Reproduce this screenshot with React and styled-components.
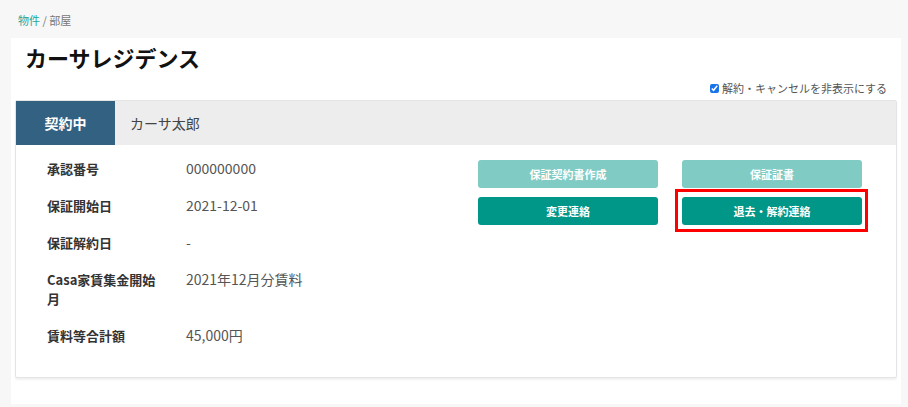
import React from "react";
import styled, { createGlobalStyle } from "styled-components";

const GlobalStyle = createGlobalStyle`
  html, body {
    margin: 0;
    padding: 0;
    background: #f7f7f7;
    font-family: "Noto Sans CJK JP", "Noto Sans", sans-serif;
  }
`;

const Page = styled.div`
  width: 908px;
  height: 407px;
  overflow: hidden;
  padding: 12px 7px 0 11px;
  box-sizing: border-box;
`;

const Breadcrumb = styled.div`
  font-size: 11px;
  line-height: 16px;
  color: #777;
  padding-left: 7px;
  margin-bottom: 10px;
`;

const CrumbLink = styled.span`
  color: #26a69a;
`;

const Panel = styled.div`
  background: #ffffff;
  padding: 5px 4px 26px 4px;
`;

const Title = styled.h1`
  margin: 0 0 0 10px;
  font-size: 22px;
  font-weight: 700;
  line-height: 28px;
  color: #111;
`;

const FilterRow = styled.label`
  display: flex;
  justify-content: flex-end;
  align-items: center;
  margin-top: 10px;
  padding-right: 10px;
  font-size: 11px;
  line-height: 14px;
  color: #555;
`;

const Check = styled.input`
  width: 9px;
  height: 9px;
  margin: 0 3px 0 0;
  accent-color: #1a73e8;
`;

const Card = styled.div`
  margin-top: 5px;
  border: 1px solid #e4e4e4;
  border-radius: 2px;
  box-shadow: 0 2px 2px rgba(0, 0, 0, 0.06);
`;

const CardHeader = styled.div`
  display: flex;
  height: 44px;
  background: #ededed;
`;

const StatusTab = styled.div`
  width: 99px;
  display: flex;
  align-items: center;
  justify-content: center;
  background: #336182;
  color: #ffffff;
  font-size: 14px;
  font-weight: 700;
`;

const Tenant = styled.div`
  display: flex;
  align-items: center;
  padding-left: 15px;
  font-size: 14px;
  color: #444;
`;

const CardBody = styled.div`
  display: grid;
  grid-template-columns: 1fr 1fr;
  padding: 5px 0 23px 0;
`;

const InfoTable = styled.div`
  padding-left: 31px;
`;

const InfoRow = styled.div`
  display: flex;
  padding: 9px 0;
  line-height: 19px;
`;

const Label = styled.div`
  width: 115px;
  flex-shrink: 0;
  margin-right: 24px;
  font-size: 13px;
  font-weight: 700;
  color: #333;
`;

const Value = styled.div`
  font-size: 14px;
  color: #555;
`;

const Actions = styled.div`
  display: grid;
  grid-template-columns: 180px 180px;
  grid-auto-rows: 28px;
  column-gap: 24px;
  row-gap: 9px;
  justify-content: end;
  align-content: start;
  padding: 10px 34px 0 0;
`;

const ActionWrap = styled.div`
  position: relative;
  display: flex;
`;

const ActionButton = styled.button`
  flex: 1;
  border: none;
  border-radius: 3px;
  background: ${(p) => (p.$disabled ? "#80cbc4" : "#009688")};
  color: #ffffff;
  font-family: inherit;
  font-size: 11px;
  font-weight: 700;
  cursor: pointer;
`;

const Highlight = styled.div`
  position: absolute;
  left: -7px;
  top: -8px;
  right: -6px;
  bottom: -7px;
  border: 3px solid #ff0000;
  pointer-events: none;
`;

const rows = [
  { label: "承認番号", value: "000000000" },
  { label: "保証開始日", value: "2021-12-01" },
  { label: "保証解約日", value: "-" },
  { label: "Casa家賃集金開始月", value: "2021年12月分賃料" },
  { label: "賃料等合計額", value: "45,000円" },
];

const actions = [
  { text: "保証契約書作成", disabled: true },
  { text: "保証証書", disabled: true },
  { text: "変更連絡" },
  { text: "退去・解約連絡", marked: true },
];

const App = () => {
  return (
    <Page>
      <GlobalStyle />
      <Breadcrumb>
        <CrumbLink>物件</CrumbLink> / 部屋
      </Breadcrumb>
      <Panel>
        <Title>カーサレジデンス</Title>
        <FilterRow>
          <Check type="checkbox" defaultChecked />
          解約・キャンセルを非表示にする
        </FilterRow>
        <Card>
          <CardHeader>
            <StatusTab>契約中</StatusTab>
            <Tenant>カーサ太郎</Tenant>
          </CardHeader>
          <CardBody>
            <InfoTable>
              {rows.map((row) => (
                <InfoRow key={row.label}>
                  <Label>{row.label}</Label>
                  <Value>{row.value}</Value>
                </InfoRow>
              ))}
            </InfoTable>
            <Actions>
              {actions.map((a) => (
                <ActionWrap key={a.text}>
                  <ActionButton $disabled={a.disabled}>{a.text}</ActionButton>
                  {a.marked && <Highlight />}
                </ActionWrap>
              ))}
            </Actions>
          </CardBody>
        </Card>
      </Panel>
    </Page>
  );
};

export default App;
